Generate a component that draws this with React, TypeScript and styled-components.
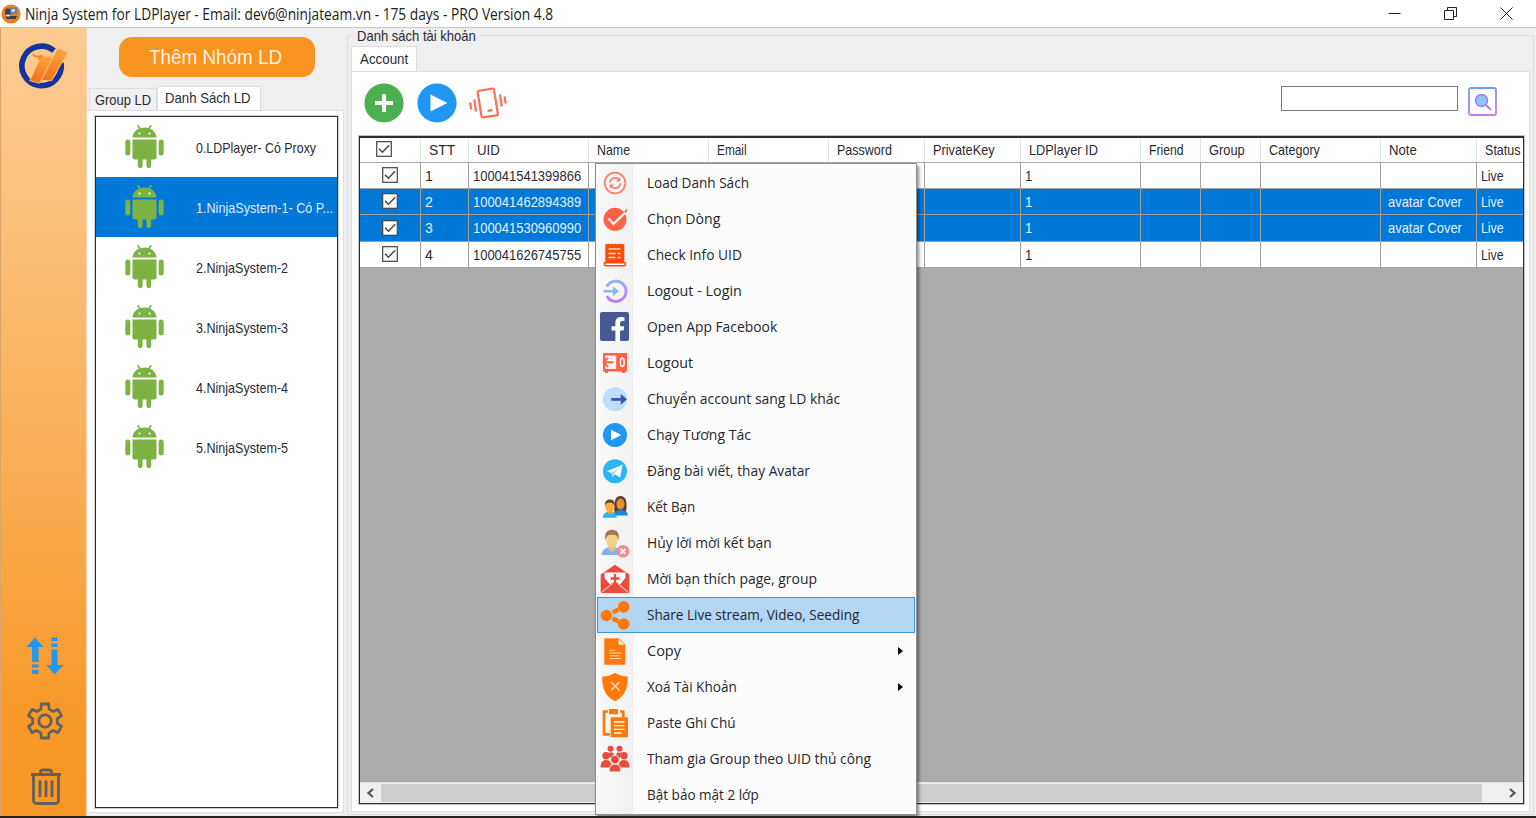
import React, { useLayoutEffect, useRef } from "react";
import styled, { createGlobalStyle } from "styled-components";
import { FaFacebookF } from "react-icons/fa";

const SANS = `"Liberation Sans", Arial, sans-serif`;
const HUMANIST = `"Open Sans", "Noto Sans", sans-serif`;

const GlobalStyle = createGlobalStyle`
  * { box-sizing: border-box; }
  body { margin: 0; overflow: hidden; background: #fff; }
  svg { display: block; flex: none; }
`;

/* ---------- Text squeezed to a given width ---------- */

const FitBox = styled.span<{ $w: number }>`
  display: block;
  flex: none;
  width: ${(p) => p.$w}px;
  white-space: nowrap;
`;

const FitInner = styled.span`
  display: inline-block;
  transform-origin: 0 50%;
`;

function Fit({ w, children }: { w: number; children: string }) {
  const ref = useRef<HTMLSpanElement>(null);
  useLayoutEffect(() => {
    const el = ref.current;
    if (el && el.offsetWidth) el.style.transform = `scaleX(${w / el.offsetWidth})`;
  }, [w, children]);
  return (
    <FitBox $w={w}>
      <FitInner ref={ref}>{children}</FitInner>
    </FitBox>
  );
}

/* ---------- Window ---------- */

const Window = styled.div`
  position: relative;
  display: flex;
  flex-direction: column;
  width: 1536px;
  height: 818px;
  overflow: hidden;
  background: #efefef;
  border-bottom: 2px solid #25221f;
  color: #2b2b33;
  font-family: ${SANS};
  font-size: 15px;
`;

const TitleBar = styled.header`
  display: flex;
  align-items: center;
  height: 28px;
  padding: 0 23px 0 1px;
  background: #fff;
  border-bottom: 1px solid #c9c9c9;
  color: #1c1c1c;
  font-family: ${HUMANIST};
  font-size: 15.5px;
  gap: 4px;
`;

const WindowButtons = styled.div`
  display: flex;
  align-items: center;
  gap: 43px;
  margin-left: auto;
`;

const Body = styled.div`
  display: flex;
  flex: 1;
  min-height: 0;
`;

const Sidebar = styled.nav`
  display: flex;
  flex-direction: column;
  align-items: center;
  width: 87px;
  padding: 14px 0 10px;
  border-left: 1px solid #dba569;
  border-right: 1px solid #f4d9b8;
  background: linear-gradient(#fccb91 0%, #fbc382 18%, #f9ab50 60%, #f79a2b 85%, #f79624 100%);
`;

const SideTools = styled.div`
  display: grid;
  justify-items: center;
  row-gap: 27px;
  margin-top: auto;
  padding-left: 3px;
`;

const TrashSlot = styled.div`
  padding: 1px 0 0 2px;
`;

/* ---------- Left panel ---------- */

const LeftPanel = styled.section`
  display: flex;
  flex-direction: column;
  width: 258px;
  padding: 9px 1px 3px 0;
`;

const AddGroupButton = styled.button`
  display: flex;
  align-items: center;
  justify-content: center;
  flex: none;
  width: 196px;
  height: 40px;
  margin-left: 31.5px;
  padding: 0 3px 1px 0;
  border: 0;
  border-radius: 13px;
  background: #f8941f;
  color: #fff1de;
  font-family: ${SANS};
  font-size: 21px;
`;

const TabStrip = styled.div<{ $mt: number; $pl: number }>`
  display: flex;
  align-items: flex-end;
  flex: none;
  margin-top: ${(p) => p.$mt}px;
  margin-bottom: -1px;
  padding-left: ${(p) => p.$pl}px;
`;

const Tab = styled.div<{ $w: number; $h: number; $active?: boolean; $pl: number; $pb?: number }>`
  display: flex;
  align-items: center;
  width: ${(p) => p.$w}px;
  height: ${(p) => p.$h}px;
  padding-left: ${(p) => p.$pl}px;
  padding-bottom: ${(p) => p.$pb ?? 0}px;
  border: 1px solid #dcdcdc;
  border-bottom: ${(p) => (p.$active ? "0" : "1px solid #dcdcdc")};
  background: ${(p) => (p.$active ? "#fff" : "#f0f0f0")};
`;

const ListPage = styled.div`
  flex: 1;
  min-height: 0;
  padding: 5px 5px 4px 7px;
  border: 1px solid #dedede;
  border-left-color: #f4f4f4;
  background: #fff;
`;

const ListBox = styled.ul`
  height: 100%;
  margin: 0;
  padding: 0;
  overflow: hidden;
  list-style: none;
  border: 1px solid #2d2d2d;
  outline: 1px solid #d0d0d0;
  background: #fff;
`;

const DeviceRow = styled.li<{ $selected?: boolean }>`
  display: flex;
  align-items: center;
  gap: 32px;
  height: 60px;
  padding-left: 28.5px;
  background: ${(p) => (p.$selected ? "#0078d7" : "transparent")};
  color: ${(p) => (p.$selected ? "#dcecfb" : "#2b2b33")};
`;

/* ---------- Right panel ---------- */

const RightPanel = styled.section`
  position: relative;
  display: flex;
  flex-direction: column;
  flex: 1;
  min-width: 0;
  margin: 7px 2px 1px 2px;
  padding: 0 3px 2px 3px;
  border: 1px solid #dcdcdc;
`;

const Legend = styled.div`
  position: absolute;
  top: -8px;
  left: 6px;
  width: 127px;
  padding-left: 3px;
  background: #efefef;
  line-height: 16px;
`;

const AccountPage = styled.div`
  display: flex;
  flex-direction: column;
  flex: 1;
  min-height: 0;
  padding: 11px 5px 7px 7px;
  border: 1px solid #dedede;
  background: #fff;
`;

const Toolbar = styled.div`
  display: flex;
  align-items: flex-start;
  flex: none;
  height: 53px;
  padding-left: 5px;
  gap: 13px;
`;

const ShakeSlot = styled.div`
  margin-left: -1px;
`;

const SearchInput = styled.input`
  width: 177px;
  height: 25px;
  margin: 3px -3px 0 auto;
  border: 1px solid #7a7a7a;
  outline: 0;
  background: #fff;
`;

const SearchButton = styled.div`
  margin: 4px 27px 0 0;
`;

const Grid = styled.div`
  display: flex;
  flex-direction: column;
  flex: 1;
  min-height: 0;
  overflow: hidden;
  border: 1px solid #2f2f2f;
  border-top-width: 2px;
  outline: 1px solid #c4c4c4;
  background: #ababab;
`;

const COLUMNS = "60px 48px 120px 120px 120px 96px 96px 120px 60px 60px 120px 96px 48px";

const HeaderRow = styled.div`
  display: grid;
  grid-template-columns: ${COLUMNS};
  flex: none;
  height: 25px;
  border-bottom: 1px solid #a8a8a8;
  background: #fff;
  padding-left: 1px;
`;

const HeaderCell = styled.div<{ $pl?: number }>`
  display: flex;
  align-items: center;
  padding: 0 0 2px ${(p) => p.$pl ?? 8}px;
  border-right: 1px solid #e3e3e3;
`;

const DataRow = styled.div<{ $selected?: boolean; $h: number }>`
  display: grid;
  grid-template-columns: ${COLUMNS};
  flex: none;
  height: ${(p) => p.$h}px;
  padding-left: 1px;
  border-bottom: 1px solid #a0a0a0;
  background: ${(p) => (p.$selected ? "#0078d7" : "#fff")};
  color: ${(p) => (p.$selected ? "#e4f1fd" : "#2b2b33")};
`;

const Cell = styled.div<{ $pl?: number }>`
  display: flex;
  align-items: center;
  padding: 0 0 1px ${(p) => p.$pl ?? 4}px;
  border-right: 1px solid #a0a0a0;
`;

const ScrollBar = styled.div`
  display: flex;
  align-items: center;
  flex: none;
  height: 21px;
  margin-top: auto;
  padding: 0 5px 0 5px;
  border-top: 1px solid #e4e4e4;
  background: #f0f0f0;
`;

const ScrollThumb = styled.div`
  width: 1101px;
  height: 18px;
  margin: 0 auto 0 6px;
  background: #cdcdcd;
`;

/* ---------- Context menu ---------- */

const Menu = styled.div`
  position: absolute;
  left: 595px;
  top: 163px;
  width: 322px;
  height: 652px;
  padding: 1px;
  border: 1px solid #8f8f8f;
  background: linear-gradient(90deg, #f9f9f9 0, #f1f1f1 37px, #fcfcfc 38px);
  box-shadow: 2px 3px 3px rgba(0, 0, 0, 0.45);
  color: #26262c;
  font-family: ${HUMANIST};
  font-size: 14.5px;
`;

const MenuItem = styled.div<{ $active?: boolean }>`
  display: flex;
  align-items: center;
  height: 36px;
  padding: 0 11px 0 2px;
  border: 1px solid ${(p) => (p.$active ? "#3a96dd" : "transparent")};
  background: ${(p) => (p.$active ? "#b3d7f3" : "transparent")};
`;

const MenuLabel = styled.span`
  padding-bottom: 2px;
`;

const IconSlot = styled.span`
  width: 30px;
  height: 30px;
  margin-right: 17px;
`;

const FbTile = styled.span`
  display: flex;
  align-items: flex-end;
  justify-content: center;
  width: 29px;
  height: 29px;
  padding-left: 6px;
  overflow: hidden;
  border-radius: 2px;
  background: #475993;
  color: #fff;
`;

const SubArrow = styled.span`
  margin-left: auto;
  border-left: 5px solid #000;
  border-top: 4.5px solid transparent;
  border-bottom: 4.5px solid transparent;
`;

/* ---------- Icons ---------- */

const AppIcon = () => (
  <svg width="20" height="20" viewBox="0 0 20 20">
    <circle cx="10" cy="10" r="9.6" fill="#ee7d1c" />
    <rect x="4" y="4.5" width="6" height="7" rx="2" fill="#34445c" />
    <rect x="9" y="3.5" width="7" height="6" fill="#5b7fa3" />
    <rect x="10.5" y="5" width="3.5" height="3" fill="#c4d7e6" />
    <path d="M4 12h12l-1.5 3H6z" fill="#3a3c4a" />
    <rect x="5" y="10.5" width="4" height="2" fill="#e9d9cc" />
  </svg>
);

const Logo = () => (
  <svg width="51" height="48" viewBox="56 125 153 144">
    <defs>
      <linearGradient id="lg" x1="0.7" y1="0" x2="0.3" y2="1">
        <stop offset="0" stopColor="#f8a63c" />
        <stop offset="1" stopColor="#f4701d" />
      </linearGradient>
    </defs>
    <path d="M164 151A59 59 0 1 0 185 188" fill="none" stroke="#14349c" strokeWidth="17" />
    <path d="M126 167l40 1-46 81-29-8z" fill="url(#lg)" stroke="#fbc482" strokeWidth="2.500" />
    <path d="M175 144l31 11-49 86-31-1z" fill="url(#lg)" stroke="#fbc482" strokeWidth="2.500" />
    <path d="M96 158l20 8 14-4 2 8-12 12-6-9-12-4z" fill="#f3882d" stroke="#fbc482" strokeWidth="1.500" />
  </svg>
);

const TransferIcon = () => (
  <svg width="38" height="38" viewBox="0 0 38 38" fill="#2196f3">
    <path d="M9 0.500l8.500 9.500h-5v15h-6.500v-15h-5.500z" />
    <rect x="6" y="27.500" width="6.500" height="3" />
    <rect x="6" y="33" width="6.500" height="4" />
    <rect x="25.500" y="0.500" width="6" height="3.500" />
    <rect x="25.500" y="6.500" width="6" height="3.500" />
    <path d="M25.500 12.500h6v15.500h6l-9 9.500-8.500-9.500h5.500z" />
  </svg>
);

const gearPath = (() => {
  const pts: string[] = [];
  for (let i = 0; i < 6; i++) {
    [
      [-19, 12.6],
      [-12, 17.4],
      [12, 17.4],
      [19, 12.6],
    ].forEach(([off, r]) => {
      const a = ((i * 60 + off - 90) * Math.PI) / 180;
      pts.push(`${(19 + r * Math.cos(a)).toFixed(2)} ${(19 + r * Math.sin(a)).toFixed(2)}`);
    });
  }
  return `M${pts.join("L")}Z`;
})();

const GearIcon = () => (
  <svg width="38" height="38" viewBox="0 0 38 38" fill="none" stroke="#64605c" strokeWidth="2.800" strokeLinejoin="round">
    <path d={gearPath} />
    <circle cx="19" cy="19" r="6.200" />
  </svg>
);

const TrashIcon = () => (
  <svg width="32" height="38" viewBox="0 0 32 38" fill="none" stroke="#64605c" strokeWidth="2.800">
    <path d="M1 6.500h30M3.500 6.500v26a3 3 0 0 0 3 3h19a3 3 0 0 0 3-3v-26M10.500 6.500v-2.500a2 2 0 0 1 2-2h7a2 2 0 0 1 2 2v2.500" />
    <path d="M10 12.500v16.500M16 12.500v16.500M22 12.500v16.500" />
  </svg>
);

const Android = () => (
  <svg width="39" height="44" viewBox="0 0 39 44" fill="#7cb342">
    <path d="M7.500 12.500c.3-4 3-7.500 6.500-9l-2-3 1.400-.8 2.200 3.300a14 14 0 0 1 7.800 0l2.200-3.300 1.400.8-2 3c3.500 1.500 6.200 5 6.500 9z" />
    <circle cx="14.500" cy="8.500" r="1.100" fill="#fff" />
    <circle cx="24.500" cy="8.500" r="1.100" fill="#fff" />
    <path d="M7.500 14.500h24v18a2 2 0 0 1-2 2h-3.300v6.300a2.300 2.300 0 0 1-4.800 0v-6.300h-3.800v6.300a2.300 2.300 0 0 1-4.800 0v-6.300h-3.300a2 2 0 0 1-2-2z" />
    <rect x="0.300" y="14.500" width="5" height="16" rx="2.500" />
    <rect x="33.700" y="14.500" width="5" height="16" rx="2.500" />
  </svg>
);

const AddIcon = () => (
  <svg width="40" height="40" viewBox="0 0 40 40">
    <circle cx="20" cy="20" r="19.600" fill="#4caf50" />
    <path d="M11 20h18M20 11v18" stroke="#fff" strokeWidth="4" />
  </svg>
);

const PlayIcon = () => (
  <svg width="40" height="40" viewBox="0 0 40 40">
    <circle cx="20" cy="20" r="19.600" fill="#2196f3" />
    <path d="M13.500 11.500L30.500 20 13.500 28.500z" fill="#fff" />
  </svg>
);

const PhoneShake = () => (
  <svg width="38" height="40" viewBox="0 0 38 40" fill="none" stroke="#ff6f57" strokeWidth="2.200">
    <rect x="10.500" y="6.500" width="16.500" height="27" rx="1.500" transform="rotate(-9 19 20)" />
    <path d="M18.500 27.900l5-.8" />
    <path d="M5.200 16.500l1.900 12M1.200 19.500l1 7M31 11.500l1.900 12M35.600 13.500l1 7" />
  </svg>
);

const SearchIcon = () => (
  <svg width="29" height="29" viewBox="0 0 29 29">
    <defs>
      <linearGradient id="sg" x1="0" y1="0" x2="0" y2="1">
        <stop offset="0" stopColor="#6a9bfb" />
        <stop offset="1" stopColor="#cd76f8" />
      </linearGradient>
    </defs>
    <rect x="1" y="1" width="27" height="27" rx="2" fill="#fff" stroke="url(#sg)" strokeWidth="1.800" />
    <circle cx="13.500" cy="13.500" r="6" fill="#90c4fb" stroke="#9a7ff0" strokeWidth="1.500" />
    <path d="M18 18l5 4.800" stroke="#a879f2" strokeWidth="1.800" />
  </svg>
);

const CheckBox = () => (
  <svg width="16" height="16" viewBox="0 0 16 16" fill="#fff" stroke="#454545" strokeWidth="1.200">
    <rect x="0.700" y="0.700" width="14.600" height="14.600" />
    <path d="M3 7.800l3.400 3.400 6.800-7" fill="none" strokeWidth="1.500" />
  </svg>
);

const CORAL = "#ff6347";
const ORANGE = "#ff780a";

const Icon30 = ({ children }: { children: React.ReactNode }) => (
  <svg width="30" height="30" viewBox="0 0 30 30">
    {children}
  </svg>
);

const icons: Record<string, React.ReactNode> = {
  load: (
    <Icon30>
      <g fill="none" stroke="#ff7d69" strokeWidth="1.700">
        <circle cx="15" cy="15" r="10.300" />
        <path d="M9.800 14.500a5.200 5.200 0 0 1 9-3M20.200 15.500a5.200 5.200 0 0 1-9 3" />
      </g>
      <path d="M20.300 9v4.500h-4.500zM9.700 21v-4.500h4.500z" fill="#ff7d69" />
    </Icon30>
  ),
  tick: (
    <Icon30>
      <circle cx="15" cy="15.300" r="11.500" fill={CORAL} />
      <path d="M8.500 14.500l5 5.500L27 7" fill="none" stroke="#fff" strokeWidth="2.200" />
      <path d="M24 7.500l3-2.500v2.500l-1.500 1.500z" fill={CORAL} />
    </Icon30>
  ),
  receipt: (
    <Icon30>
      <path d="M5.300 3.500l1.500 1 1.600-1 1.600 1 1.600-1 1.600 1 1.600-1 1.600 1 1.600-1 1.600 1 1.600-1 1.600 1 1.500-1V22h-19z" fill="#ff4b0a" />
      <path d="M8.500 9h12M8.500 13.500h7M8.500 17.500h7M17.500 13.500h3M17.500 17.500h3" stroke="#ffe3d6" strokeWidth="1.600" />
      <path d="M4.400 22.700h21v1.500a1.500 1.500 0 0 1-1.500 1.600H6a1.600 1.600 0 0 1-1.600-1.600z" fill="#fff" stroke="#ff4b0a" strokeWidth="1.500" />
    </Icon30>
  ),
  login: (
    <Icon30>
      <defs>
        <linearGradient id="ll" x1="0" y1="0" x2="0" y2="1">
          <stop offset="0" stopColor="#8fb0fb" />
          <stop offset="1" stopColor="#c07bf5" />
        </linearGradient>
      </defs>
      <path d="M6.800 10.500a10.200 10.200 0 1 1 0 9.500" fill="none" stroke="url(#ll)" strokeWidth="2.800" />
      <path d="M3.500 14h9.500v-3.500l6 4.700-6 4.700V16.500H3.500z" fill="#86b6fb" />
    </Icon30>
  ),
  facebook: (
    <FbTile>
      <FaFacebookF size={24} />
    </FbTile>
  ),
  safe: (
    <Icon30>
      <path d="M3 5h24v18.500h-2V25h-3v-1.500H8V25H5v-1.500H3z" fill={CORAL} />
      <path d="M5.200 7.500h11V21h-11z" fill="#fff4f1" />
      <path d="M3 14.300h10.500M8 9.800l-4.500 4.500L8 18.800" fill="none" stroke={CORAL} strokeWidth="1.900" />
      <ellipse cx="22.300" cy="14.300" rx="1.900" ry="4.300" fill={CORAL} stroke="#fff" strokeWidth="1.500" />
    </Icon30>
  ),
  move: (
    <Icon30>
      <circle cx="15" cy="15.300" r="12" fill="#bbdefb" />
      <path d="M11.300 13.900h9.500v-4l6.200 5.400-6.200 5.400v-4h-9.500z" fill="#3f51b5" />
    </Icon30>
  ),
  play: (
    <Icon30>
      <circle cx="15" cy="15" r="12" fill="#2196f3" />
      <path d="M11 9.800L21.300 15 11 20.200z" fill="#fff" />
    </Icon30>
  ),
  telegram: (
    <Icon30>
      <circle cx="15" cy="15.200" r="12" fill="#29b6f6" />
      <path d="M6.800 15.200L22.600 8.800l-2.500 12.800-5.200-3.400-2.500 2.800-.8-4.100z" fill="#fff" />
      <path d="M11.600 16.900l8-5.700-5.300 6.400-1.900 3.400z" fill="#b6cfdb" />
    </Icon30>
  ),
  friends: (
    <Icon30>
      <path d="M14.500 22c-1-11 .5-18 6-18s7 6 5.500 16z" fill="#5b3b34" />
      <path d="M14 23.500c0-4 3-5.500 7-5.500s6.500 1.500 6.700 5.500z" fill="#1b87d6" />
      <ellipse cx="20.500" cy="12" rx="4" ry="5.600" fill="#e6922d" />
      <path d="M2.800 25.800c.2-4.200 3-6 7-6s6.700 2 6.900 6z" fill="#2ab4f4" />
      <path d="M7.500 17h5v4l-2.500 2-2.500-2z" fill="#f29a24" />
      <ellipse cx="9.800" cy="14.500" rx="4.700" ry="5.400" fill="#ffb03d" />
      <path d="M5 14c-.5-5 2-6.500 5-6.500s5.500 2 4.700 6.500c-1-3-3-3.300-5-3.300s-4 .5-4.700 3.300z" fill="#6b4a35" />
    </Icon30>
  ),
  unfriend: (
    <Icon30>
      <path d="M1.800 27c.3-5.500 4-8 10-8s9 3 9 8z" fill="#7fb0ee" />
      <path d="M8.500 17h7v4.500L12 24l-3.500-2.500z" fill="#e8bf78" />
      <ellipse cx="12" cy="11.500" rx="5.800" ry="8" fill="#f3cf8e" />
      <path d="M5.600 12.500C4 5 7 1.700 12 1.700S20 5 18.400 12.500c-.8-4.500-2-5.700-6.400-5.700s-5.600 1.200-6.400 5.700z" fill="#a5744f" />
      <circle cx="23" cy="23.300" r="6.300" fill="#f28a90" />
      <path d="M20.500 20.800l5 5M25.500 20.800l-5 5" stroke="#fff" strokeWidth="1.700" />
    </Icon30>
  ),
  mail: (
    <Icon30>
      <path d="M0.700 10.500L15 .8l14.300 9.700V27.500a1.500 1.500 0 0 1-1.500 1.500H2.200a1.500 1.500 0 0 1-1.500-1.500z" fill="#e84c3d" />
      <path d="M4.500 8.500h21v5.500L20 20.500 15 17.500l-5 3L4.500 14z" fill="#fff" />
      <path d="M2 28l10.500-8.500M28 28l-10.500-8.500" stroke="#f7b5ae" strokeWidth="1.100" />
      <path d="M10.500 14.500h9M15 10v9" stroke="#e84c3d" strokeWidth="2.400" />
    </Icon30>
  ),
  share: (
    <Icon30>
      <path d="M12.500 12.600l6-3.200M12.500 18.300l6 3.200" stroke={ORANGE} strokeWidth="4.500" />
      <circle cx="6.300" cy="15.500" r="5.700" fill={ORANGE} />
      <circle cx="23.700" cy="6.900" r="5.800" fill={ORANGE} />
      <circle cx="23.700" cy="24" r="5.800" fill={ORANGE} />
    </Icon30>
  ),
  doc: (
    <Icon30>
      <path d="M4.300 2.200h14.500l6.500 6.500v20H4.300z" fill={ORANGE} />
      <path d="M18.500 2.800v6h6z" fill="#fff0e2" />
      <path d="M9.500 14.200h6M9.500 17h11.500M9.500 19.800h9.500M9.500 22.500h11.500" stroke="#ffd3ac" strokeWidth="1.100" />
    </Icon30>
  ),
  shield: (
    <Icon30>
      <path d="M15 .8c3.500 2.500 7.500 3.500 12.700 3.700.5 12-3.200 20-12.700 24.800C5.500 24.500 1.800 16.500 2.300 4.500 7.500 4.300 11.500 3.300 15 .8z" fill={ORANGE} />
      <path d="M11 10l8.500 8.500M19.500 10L11 18.500" stroke="#ffe0c4" strokeWidth="1.300" />
    </Icon30>
  ),
  paste: (
    <Icon30>
      <path d="M8 3.500H4v22.800h6M20 3.500h3.200v6" fill="none" stroke={ORANGE} strokeWidth="2.700" />
      <rect x="9" y="1" width="9" height="5.300" fill={ORANGE} />
      <rect x="10.700" y="9.300" width="17.300" height="20" fill={ORANGE} />
      <path d="M14 14h10.500M14 17.700h10.500M14 21.300h10.500M14 25h7.500" stroke="#fff" strokeWidth="1.300" />
    </Icon30>
  ),
  group: (
    <Icon30>
      <g fill="#e84c3d">
        <circle cx="10.500" cy="4.800" r="3" />
        <circle cx="19.500" cy="4.800" r="3" />
        <path d="M8.500 8.500h4l2 3-2.500 2.500h-2zM17.500 8.500h4L20 14h-2l-2.500-2.500z" />
        <circle cx="6" cy="11.800" r="3.700" />
        <circle cx="24" cy="11.800" r="3.700" />
        <path d="M.5 23.500c0-5 2-7.500 5.500-7.500s5.500 2 5.500 7.500zM18.500 23.500c0-5.500 2-7.500 5.500-7.500s5.500 2.500 5.500 7.500z" />
        <path d="M9 28c0-5.500 2.200-8 6-8s6 2.500 6 8z" stroke="#f8f8f8" strokeWidth="1" />
        <circle cx="15" cy="15.700" r="4.300" stroke="#f8f8f8" strokeWidth="1" />
      </g>
    </Icon30>
  ),
};

/* ---------- Data ---------- */

const devices: [string, number][] = [
  ["0.LDPlayer- Có Proxy", 120],
  ["1.NinjaSystem-1- Có P...", 137],
  ["2.NinjaSystem-2", 92],
  ["3.NinjaSystem-3", 92],
  ["4.NinjaSystem-4", 92],
  ["5.NinjaSystem-5", 92],
];

const headers: [string, number][] = [
  ["STT", 26],
  ["UID", 23],
  ["Name", 33],
  ["Email", 30],
  ["Password", 55],
  ["PrivateKey", 62],
  ["LDPlayer ID", 69],
  ["Friend", 35],
  ["Group", 36],
  ["Category", 51],
  ["Note", 28],
  ["Status", 36],
];

const accounts = [
  { n: "1", uid: "100041541399866", note: "", selected: false, h: 26 },
  { n: "2", uid: "100041462894389", note: "avatar Cover", selected: true, h: 26 },
  { n: "3", uid: "100041530960990", note: "avatar Cover", selected: true, h: 27 },
  { n: "4", uid: "100041626745755", note: "", selected: false, h: 26 },
];

const menu: { icon?: string; label: string; w: number; sub?: boolean; active?: boolean }[] = [
  { icon: "load", label: "Load Danh Sách", w: 102 },
  { icon: "tick", label: "Chọn Dòng", w: 73 },
  { icon: "receipt", label: "Check Info UID", w: 95 },
  { icon: "login", label: "Logout - Login", w: 95 },
  { icon: "facebook", label: "Open App Facebook", w: 130 },
  { icon: "safe", label: "Logout", w: 46 },
  { icon: "move", label: "Chuyển account sang LD khác", w: 193 },
  { icon: "play", label: "Chạy Tương Tác", w: 104 },
  { icon: "telegram", label: "Đăng bài viết, thay Avatar", w: 163 },
  { icon: "friends", label: "Kết Bạn", w: 48 },
  { icon: "unfriend", label: "Hủy lời mời kết bạn", w: 125 },
  { icon: "mail", label: "Mời bạn thích page, group", w: 170 },
  { icon: "share", label: "Share Live stream, Video, Seeding", w: 212, active: true },
  { icon: "doc", label: "Copy", w: 34, sub: true },
  { icon: "shield", label: "Xoá Tài Khoản", w: 90, sub: true },
  { icon: "paste", label: "Paste Ghi Chú", w: 89 },
  { icon: "group", label: "Tham gia Group theo UID thủ công", w: 224 },
  { label: "Bật bảo mật 2 lớp", w: 112 },
];

/* ---------- App ---------- */

export default function App() {
  return (
    <Window>
      <GlobalStyle />
      <TitleBar>
        <AppIcon />
        <Fit w={528}>Ninja System for LDPlayer - Email: dev6@ninjateam.vn - 175 days - PRO Version 4.8</Fit>
        <WindowButtons>
          <svg width="13" height="13" viewBox="0 0 13 13" stroke="#222" fill="none">
            <path d="M0.500 6.500h12" />
          </svg>
          <svg width="13" height="13" viewBox="0 0 13 13" stroke="#222" fill="none">
            <path d="M0.500 3.500h9v9h-9zM3.500 3v-2.500h9v9h-2.500" />
          </svg>
          <svg width="13" height="13" viewBox="0 0 13 13" stroke="#222" fill="none">
            <path d="M0.500 0.500l12 12M12.500 0.500l-12 12" />
          </svg>
        </WindowButtons>
      </TitleBar>
      <Body>
        <Sidebar>
          <Logo />
          <SideTools>
            <TransferIcon />
            <GearIcon />
            <TrashSlot>
              <TrashIcon />
            </TrashSlot>
          </SideTools>
        </Sidebar>

        <LeftPanel>
          <AddGroupButton>
            <Fit w={133}>Thêm Nhóm LD</Fit>
          </AddGroupButton>
          <TabStrip $mt={9} $pl={2}>
            <Tab $w={68} $h={23} $pl={5}>
              <Fit w={56}>Group LD</Fit>
            </Tab>
            <Tab $w={104} $h={25} $pl={7} $pb={4} $active>
              <Fit w={86}>Danh Sách LD</Fit>
            </Tab>
          </TabStrip>
          <ListPage>
            <ListBox>
              {devices.map(([name, w], i) => (
                <DeviceRow key={name} $selected={i === 1}>
                  <Android />
                  <Fit w={w}>{name}</Fit>
                </DeviceRow>
              ))}
            </ListBox>
          </ListPage>
        </LeftPanel>

        <RightPanel>
          <Legend>
            <Fit w={119}>Danh sách tài khoản</Fit>
          </Legend>
          <TabStrip $mt={10} $pl={0}>
            <Tab $w={66} $h={26} $pl={8} $pb={2} $active>
              <Fit w={48}>Account</Fit>
            </Tab>
          </TabStrip>
          <AccountPage>
            <Toolbar>
              <AddIcon />
              <PlayIcon />
              <ShakeSlot>
                <PhoneShake />
              </ShakeSlot>
              <SearchInput />
              <SearchButton>
                <SearchIcon />
              </SearchButton>
            </Toolbar>
            <Grid>
              <HeaderRow>
                <HeaderCell $pl={15}>
                  <CheckBox />
                </HeaderCell>
                {headers.map(([label, w]) => (
                  <HeaderCell key={label}>
                    <Fit w={w}>{label}</Fit>
                  </HeaderCell>
                ))}
              </HeaderRow>
              {accounts.map((a) => (
                <DataRow key={a.n} $selected={a.selected} $h={a.h}>
                  <Cell $pl={21}>
                    <CheckBox />
                  </Cell>
                  <Cell>
                    <Fit w={7.5}>{a.n}</Fit>
                  </Cell>
                  <Cell>
                    <Fit w={108}>{a.uid}</Fit>
                  </Cell>
                  <Cell />
                  <Cell />
                  <Cell />
                  <Cell />
                  <Cell>
                    <Fit w={7}>1</Fit>
                  </Cell>
                  <Cell />
                  <Cell />
                  <Cell />
                  <Cell $pl={7}>{a.note ? <Fit w={74}>{a.note}</Fit> : null}</Cell>
                  <Cell>
                    <Fit w={23}>Live</Fit>
                  </Cell>
                </DataRow>
              ))}
              <ScrollBar>
                <svg width="10" height="10" viewBox="0 0 10 10" fill="none" stroke="#555" strokeWidth="2.200">
                  <path d="M8 1L3.500 5 8 9" />
                </svg>
                <ScrollThumb />
                <svg width="10" height="10" viewBox="0 0 10 10" fill="none" stroke="#555" strokeWidth="2.200">
                  <path d="M2 1l4.500 4L2 9" />
                </svg>
              </ScrollBar>
            </Grid>
          </AccountPage>
        </RightPanel>
      </Body>

      <Menu>
        {menu.map((m) => (
          <MenuItem key={m.label} $active={m.active}>
            <IconSlot>{m.icon ? icons[m.icon] : null}</IconSlot>
            <MenuLabel>
              <Fit w={m.w}>{m.label}</Fit>
            </MenuLabel>
            {m.sub ? <SubArrow /> : null}
          </MenuItem>
        ))}
      </Menu>
    </Window>
  );
}
